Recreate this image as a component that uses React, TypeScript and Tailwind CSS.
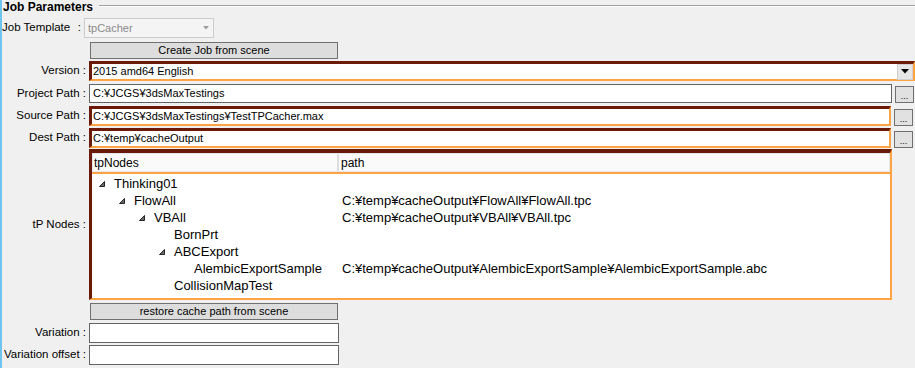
import React from 'react';

interface TreeNode {
  name: string;
  level: number;
  expandable: boolean;
  path?: string;
}

const nodes: TreeNode[] = [
  { name: 'Thinking01', level: 0, expandable: true },
  { name: 'FlowAll', level: 1, expandable: true, path: 'C:¥temp¥cacheOutput¥FlowAll¥FlowAll.tpc' },
  { name: 'VBAll', level: 2, expandable: true, path: 'C:¥temp¥cacheOutput¥VBAll¥VBAll.tpc' },
  { name: 'BornPrt', level: 3, expandable: false },
  { name: 'ABCExport', level: 3, expandable: true },
  {
    name: 'AlembicExportSample',
    level: 4,
    expandable: false,
    path: 'C:¥temp¥cacheOutput¥AlembicExportSample¥AlembicExportSample.abc',
  },
  { name: 'CollisionMapTest', level: 3, expandable: false },
];

const Label = ({ text }: { text: string }) => (
  <div className="w-[87px] shrink-0 pr-[3px] text-right text-[11.5px] whitespace-nowrap">{text}</div>
);

const BrowseButton = () => (
  <div className="ml-[3px] mt-[2px] flex h-[17px] w-[19px] items-end justify-center border border-[#707070] bg-[#e1e1e1] pb-[1px] text-[9px] leading-none">
    ...
  </div>
);

const Expander = () => (
  <svg width="6" height="6" viewBox="0 0 6 6" className="shrink-0">
    <polygon points="5.5,0.5 5.5,5.5 0.5,5.5" fill="#6a6a6a" stroke="#262626" strokeWidth="1" />
  </svg>
);

const ActiveBox = 'border-t-[3px] border-l-[3px] border-r-2 border-b-2 border-t-[#6b1a08] border-l-[#6b1a08] border-r-[#ffa345] border-b-[#ffa345] bg-white';

export default function App() {
  return (
    <div className="h-[368px] w-[915px] overflow-hidden border-l-2 border-[#6cc4ef] bg-[#f0f0f0] font-['Liberation_Sans',Arial,sans-serif] text-[11px] text-black">
      {/* heading */}
      <div className="flex h-[14px] items-center">
        <span className="pl-[1px] text-[12px] font-bold leading-none">Job Parameters</span>
        <div className="ml-[6px] mt-[-3px] h-[2px] flex-1 border-t border-b border-t-[#a0a0a0] border-b-white" />
      </div>

      {/* job template */}
      <div className="mt-[4px] flex h-[20px] items-center">
        <div className="flex w-[82px] shrink-0 justify-between pr-[3px] text-[11.5px]">
          <span>Job Template</span>
          <span>:</span>
        </div>
        <div className="flex h-full w-[130px] items-center justify-between border border-[#cccccc] bg-[#f4f4f4] pl-[3px] pr-[4px] text-[#8a8a8a]">
          <span>tpCacher</span>
          <svg width="6" height="4" viewBox="0 0 6 4">
            <polygon points="0,0 6,0 3,3.5" fill="#a0a0a0" />
          </svg>
        </div>
      </div>

      {/* create job */}
      <div className="mt-[4px] flex h-[17px] pl-[88px]">
        <div className="flex w-[248px] items-center justify-center border border-[#707070] bg-[#dddddd]">
          Create Job from scene
        </div>
      </div>

      {/* version */}
      <div className="mt-[2px] flex h-[20px] items-center">
        <Label text="Version :" />
        <div className={`flex h-full flex-1 items-center justify-between pl-[1px] ${ActiveBox}`}>
          <span>2015 amd64 English</span>
          <div className="flex h-[16px] w-[16px] items-center justify-center border border-[#d0d0d0] bg-[#e6e6e6]">
            <svg width="8" height="5" viewBox="0 0 8 5">
              <polygon points="0,0 8,0 4,4.5" fill="#000" />
            </svg>
          </div>
        </div>
      </div>

      {/* project path */}
      <div className="mt-[3px] flex h-[19px] items-center">
        <Label text="Project Path :" />
        <div className="flex h-full w-[803px] items-center border border-[#646464] bg-white pl-[3px]">
          C:¥JCGS¥3dsMaxTestings
        </div>
        <BrowseButton />
      </div>

      {/* source path */}
      <div className="mt-[3px] flex h-[20px] items-center">
        <Label text="Source Path :" />
        <div className={`flex h-full w-[802px] items-center pl-[1px] ${ActiveBox}`}>
          C:¥JCGS¥3dsMaxTestings¥TestTPCacher.max
        </div>
        <BrowseButton />
      </div>

      {/* dest path */}
      <div className="mt-[2px] flex h-[20px] items-center">
        <Label text="Dest Path :" />
        <div className={`flex h-full w-[802px] items-center pl-[1px] ${ActiveBox}`}>
          C:¥temp¥cacheOutput
        </div>
        <BrowseButton />
      </div>

      {/* tp nodes */}
      <div className="mt-[1px] flex h-[151px]">
        <div className="flex w-[87px] shrink-0 items-center justify-end pr-[3px] text-[11.5px]">tP Nodes :</div>
        <div className={`flex h-full w-[803px] flex-col !border-t-4 ${ActiveBox}`}>
          <div className="flex h-[21px] shrink-0 border-b-2 border-[#ffa345]">
            <div className="flex h-full flex-1 border border-[#e3e8ee] bg-[#fafafa] text-[12px]">
              <div className="flex w-[246px] items-center border-r-2 border-[#dedede] pl-[1px]">tpNodes</div>
              <div className="flex items-center pl-[2px]">path</div>
            </div>
          </div>
          <div className="flex-1 pt-[1px] text-[13px]">
            {nodes.map((n) => (
              <div key={n.name} className="flex h-[17px] items-center">
                <div
                  className="flex w-[250px] shrink-0 items-center gap-[9px]"
                  style={{ paddingLeft: 7 + n.level * 20 }}
                >
                  {n.expandable ? <Expander /> : <span className="w-[6px] shrink-0" />}
                  <span>{n.name}</span>
                </div>
                {n.path && <span className="whitespace-nowrap">{n.path}</span>}
              </div>
            ))}
          </div>
        </div>
      </div>

      {/* restore */}
      <div className="mt-[3px] flex h-[17px] pl-[88px]">
        <div className="flex w-[248px] items-center justify-center border border-[#707070] bg-[#dddddd]">
          restore cache path from scene
        </div>
      </div>

      {/* variation */}
      <div className="mt-[3px] flex h-[20px] items-center">
        <Label text="Variation :" />
        <div className="h-full w-[250px] border border-[#646464] bg-white" />
      </div>

      <div className="mt-[2px] flex h-[20px] items-center">
        <Label text="Variation offset :" />
        <div className="h-full w-[250px] border border-[#646464] bg-white" />
      </div>
    </div>
  );
}
